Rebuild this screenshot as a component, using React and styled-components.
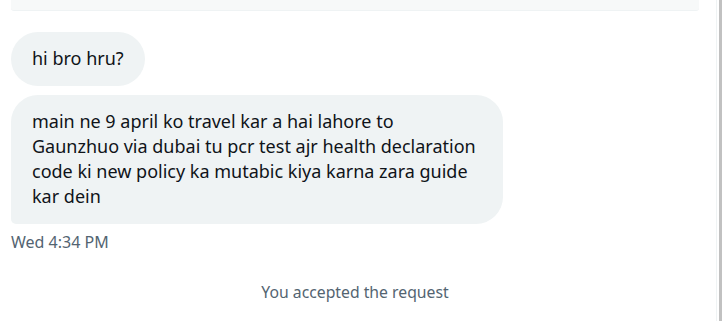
import React from "react";
import styled, { createGlobalStyle } from "styled-components";

const Global = createGlobalStyle`
  html, body { margin: 0; padding: 0; background: #fff; overflow: hidden; }
  body { font-family: "Segoe UI", "Noto Sans", "Open Sans", sans-serif; }
`;

const Page = styled.div`
  display: flex;
  width: 723px;
  height: 321px;
  overflow: hidden;
`;

const Conversation = styled.div`
  flex: 1;
  display: flex;
  flex-direction: column;
  padding: 0 17px 0 11px;
  border-right: 1px solid #eff3f4;
`;

const Scrollbar = styled.div`
  width: 6px;
  display: flex;
  justify-content: center;
  background: #fff;
`;

const Thumb = styled.div`
  width: 3px;
  height: 100%;
  background: #c1c1c1;
`;

const PrevCard = styled.div`
  height: 10px;
  background: #f7f9f9;
  border-bottom: 1px solid #eff3f4;
  border-radius: 0 0 3px 3px;
`;

const Bubble = styled.div`
  box-sizing: border-box;
  align-self: flex-start;
  max-width: 492px;
  background: #eff3f4;
  color: #0f1419;
  font-size: 18px;
  line-height: 25px;
  padding: 14px 21px 15px 21px;
  border-radius: ${(p) => (p.$last ? "27px 27px 27px 5px" : "27px")};
  margin-top: ${(p) => p.$gap}px;
`;

const Timestamp = styled.div`
  color: #536471;
  font-size: 16px;
  line-height: 20px;
  margin-top: 8px;
`;

const Notice = styled.div`
  text-align: center;
  color: #536471;
  font-size: 15.75px;
  line-height: 20px;
  margin-top: 30px;
`;

export default function App() {
  return (
    <>
      <Global />
      <Page>
        <Conversation>
          <PrevCard />
          <Bubble $gap={21}>hi bro hru?</Bubble>
          <Bubble $gap={9} $last>
            main ne 9 april ko travel kar a hai lahore to Gaunzhuo via dubai tu pcr test ajr health declaration code ki new policy ka mutabic kiya karna zara guide kar dein
          </Bubble>
          <Timestamp>Wed 4:34 PM</Timestamp>
          <Notice>You accepted the request</Notice>
        </Conversation>
        <Scrollbar>
          <Thumb />
        </Scrollbar>
      </Page>
    </>
  );
}
